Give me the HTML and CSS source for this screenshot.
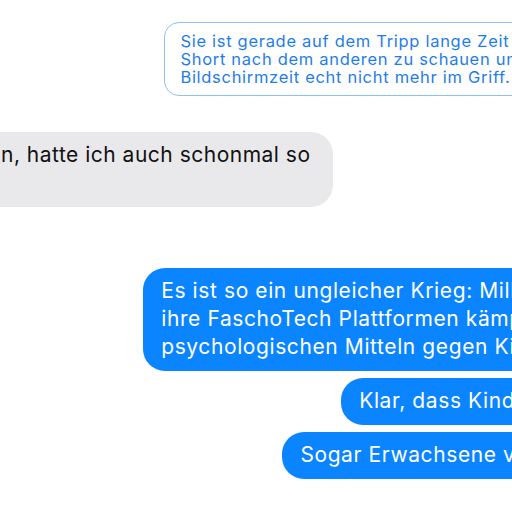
FILE: index.html
```html
<!DOCTYPE html>
<html lang="de">
<head>
    <meta charset="UTF-8" />
    <title>Nachrichten</title>
    <link rel="stylesheet" href="styles.css">
</head>
<body>
    <div class="chat">
        <div class="quote">Sie ist gerade auf dem Tripp lange Zeit nur einen<br>Short nach dem anderen zu schauen und hat<br>Bildschirmzeit echt nicht mehr im Griff.</div>

        <div class="bubble received">Oh ja, bei meinem Sohn, hatte ich auch schonmal so<br>ähnlich.</div>

        <div class="group">
            <div class="bubble sent">Es ist so ein ungleicher Krieg: Milliardäre<br>ihre FaschoTech Plattformen kämpfen mit<br>psychologischen Mitteln gegen Kinder.</div>
            <div class="bubble sent">Klar, dass Kinder dann</div>
            <div class="bubble sent">Sogar Erwachsene verlieren</div>
        </div>
    </div>
</body>
</html>
```
FILE: styles.css
```css
* {
    margin: 0;
    padding: 0;
    box-sizing: border-box;
}
body {
    width: 512px;
    height: 512px;
    overflow: hidden;
    background-color: white;
    font-family: Inter, "Noto Sans", sans-serif;
}
.chat {
    display: flex;
    flex-direction: column;
    width: 863px;
    margin-left: -250px;
    padding-top: 22px;
}
.quote {
    align-self: flex-end;
    white-space: nowrap;
    border: 1.5px solid #8ec2f2;
    border-radius: 15px;
    padding: 8.5px 18px 9px 15px;
    color: #1f7ee8;
    font-size: 16.5px;
    line-height: 18px;
    letter-spacing: 0.7px;
}
.bubble {
    white-space: nowrap;
    font-size: 21px;
    line-height: 28px;
    letter-spacing: 0.6px;
    padding: 9px 18px 10px;
    border-radius: 22px;
}
.received {
    align-self: flex-start;
    margin-top: 36px;
    padding-right: 22px;
    background-color: #e9e9eb;
    color: #111;
    letter-spacing: 0.5px;
}
.group {
    display: flex;
    flex-direction: column;
    align-items: flex-end;
    gap: 7px;
    margin-top: 61px;
}
.sent {
    background-color: #0a84ff;
    color: white;
}
```
